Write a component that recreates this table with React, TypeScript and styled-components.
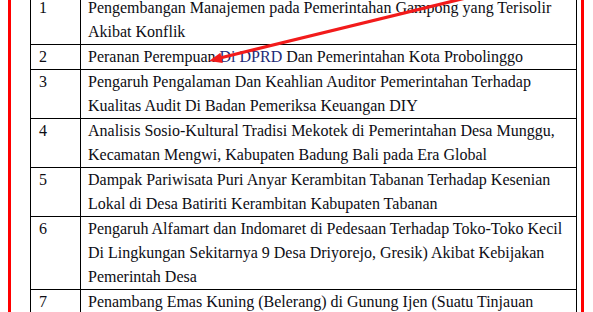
import styled, { createGlobalStyle } from "styled-components";

const GlobalStyle = createGlobalStyle`
  html, body {
    margin: 0;
    padding: 0;
    background: #ffffff;
  }
  body {
    font-family: "Liberation Serif", "Times New Roman", serif;
  }
`;

// Style
const Page = styled.div`
  position: relative;
  width: 593px;
  height: 312px;
  overflow: hidden;
`;

const Frame = styled.div`
  margin-left: 8px;
  width: 576px;
  height: 100%;
  box-sizing: border-box;
  padding: 0 4px 0 19px;
  border-left: 3px solid #ff0000;
  border-right: 3px solid #ff0000;
  overflow: hidden;
`;

const Table = styled.table`
  margin-top: -5px;
  width: 547px;
  border-collapse: collapse;
  table-layout: fixed;
  font-family: "Liberation Serif", "Times New Roman", serif;
  font-size: 16px;
  line-height: 24px;
  color: #0d0d14;

  td {
    border: 1px solid #000000;
    vertical-align: top;
  }
`;

const NoCell = styled.td`
  padding: 0 7px 0 8px;
`;

const TitleCell = styled.td`
  padding: 0 8px 0 7px;
`;

const Highlight = styled.span`
  color: #1d2a78;
`;

const Arrow = styled.svg`
  position: absolute;
  top: 0;
  left: 0;
  pointer-events: none;
`;

interface IRow {
  no: number;
  title: React.ReactNode;
}

const rows: IRow[] = [
  {
    no: 1,
    title:
      "Pengembangan Manajemen pada Pemerintahan Gampong yang Terisolir Akibat Konflik",
  },
  {
    no: 2,
    title: (
      <>
        Peranan Perempuan <Highlight>Di DPRD</Highlight> Dan Pemerintahan Kota
        Probolinggo
      </>
    ),
  },
  {
    no: 3,
    title:
      "Pengaruh Pengalaman Dan Keahlian Auditor Pemerintahan Terhadap Kualitas Audit Di Badan Pemeriksa Keuangan DIY",
  },
  {
    no: 4,
    title:
      "Analisis Sosio-Kultural Tradisi Mekotek di Pemerintahan Desa Munggu, Kecamatan Mengwi, Kabupaten Badung Bali pada Era Global",
  },
  {
    no: 5,
    title:
      "Dampak Pariwisata Puri Anyar Kerambitan Tabanan Terhadap Kesenian Lokal di Desa Batiriti Kerambitan Kabupaten Tabanan",
  },
  {
    no: 6,
    title:
      "Pengaruh Alfamart dan Indomaret di Pedesaan Terhadap Toko-Toko Kecil Di Lingkungan Sekitarnya 9 Desa Driyorejo, Gresik) Akibat Kebijakan Pemerintah Desa",
  },
  {
    no: 7,
    title:
      "Penambang Emas Kuning (Belerang) di Gunung Ijen (Suatu Tinjauan Sosiologis Terhadap Kehidupan Penambang)",
  },
];

export default function App() {
  return (
    <>
      <GlobalStyle />
      <Page>
        <Frame>
          <Table>
            <colgroup>
              <col style={{ width: "50px" }} />
              <col />
            </colgroup>
            <tbody>
              {rows.map((row) => (
                <tr key={row.no}>
                  <NoCell>{row.no}</NoCell>
                  <TitleCell>{row.title}</TitleCell>
                </tr>
              ))}
            </tbody>
          </Table>
        </Frame>
        <Arrow width="593" height="312" viewBox="0 0 593 312">
          <line
            x1="478"
            y1="-5"
            x2="220"
            y2="58"
            stroke="#f21b1b"
            strokeWidth="3.2"
          />
          <polygon points="209,61 222.8,63 220.4,52.8" fill="#f21b1b" />
        </Arrow>
      </Page>
    </>
  );
}
